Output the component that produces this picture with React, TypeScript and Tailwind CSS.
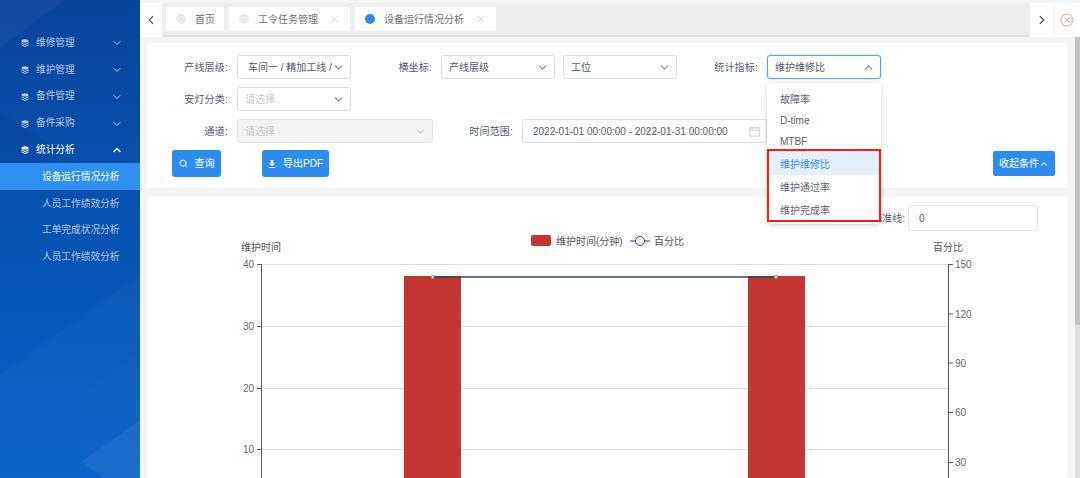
import { ChevronDown, ChevronLeft, ChevronRight, ChevronUp, Search, X } from "lucide-react";

const fontStack = "font-['Liberation_Sans','Noto_Sans_CJK_SC',sans-serif]";

const menus = ["维修管理", "维护管理", "备件管理", "备件采购"];
const subMenus = ["设备运行情况分析", "人员工作绩效分析", "工单完成状况分析", "人员工作绩效分析"];
const options = ["故障率", "D-time", "MTBF"];

function StackIcon({ className }: { className: string }) {
  return (
    <svg viewBox="0 0 8 8" className={className} fill="currentColor">
      <ellipse cx="4" cy="1.9" rx="3.5" ry="1.7" />
      <path d="M.4 3.3 4 5l3.6-1.7v1L4 6 .4 4.3z" />
      <path d="M.4 5.2 4 6.9l3.6-1.7v1L4 8 .4 6.2z" />
    </svg>
  );
}

function Sidebar() {
  return (
    <aside className="relative w-[140px] h-full shrink-0 overflow-hidden bg-gradient-to-b from-[#08459d] to-[#0763c8] pt-[29px]">
      <svg viewBox="0 0 140 478" className="absolute inset-0 w-[140px] h-[478px]">
        <path d="M0 0H64L0 48z" fill="#ffffff" fillOpacity="0.03" />
        <path d="M0 112 60 150 0 190z" fill="#000000" fillOpacity="0.03" />
        <path d="M0 375 140 275V478H0z" fill="#ffffff" fillOpacity="0.018" />
        <path d="M80 395 140 352V478H80z" fill="#ffffff" fillOpacity="0.012" />
        <path d="M82 462 140 420V478H105z" fill="#ffffff" fillOpacity="0.05" />
      </svg>
      <div className="relative flex flex-col text-[9.7px]">
        {menus.map((m) => (
          <div key={m} className="flex items-center h-[26.8px] pt-[1.5px] pl-[21px] pr-[17px] text-[#b4c6e2]">
            <StackIcon className="w-[8px] h-[8px] mr-[7px]" />
            <span>{m}</span>
            <ChevronDown className="ml-auto w-[12px] h-[12px]" strokeWidth={2} />
          </div>
        ))}
        <div className="flex items-center h-[26.8px] pt-[1.5px] pl-[21px] pr-[17px] text-white">
          <StackIcon className="w-[8px] h-[8px] mr-[7px]" />
          <span>统计分析</span>
          <ChevronUp className="ml-auto w-[12px] h-[12px]" strokeWidth={2.5} />
        </div>
        {subMenus.map((s, i) => (
          <div
            key={i}
            className={
              i === 0
                ? "flex items-center h-[26.8px] pt-[1.5px] pl-[42px] bg-[#3090f0] text-white"
                : "flex items-center h-[26.8px] pt-[1.5px] pl-[42px] text-[#b4c6e2]"
            }
          >
            {s}
          </div>
        ))}
      </div>
    </aside>
  );
}

function Tab({ title, active, closable, className }: { title: string; active?: boolean; closable?: boolean; className: string }) {
  return (
    <div className={`flex items-center h-[24px] bg-white pl-[10px] text-[#6b6f76] ${className}`}>
      <span className={active ? "w-[10px] h-[10px] rounded-full bg-[#2d8cf0]" : "w-[10px] h-[10px] rounded-full bg-[#e8eaec]"} />
      <span className="ml-[9px]">{title}</span>
      {closable && <X className="ml-auto mr-[10px] w-[11px] h-[11px] text-[#b0b3b8]" strokeWidth={1.3} />}
    </div>
  );
}

function TabBar() {
  return (
    <div className="flex h-[34px] mt-[3px] shrink-0 text-[10px]">
      <div className="flex items-center justify-center w-[22px] bg-white text-[#515a6e]">
        <ChevronLeft className="w-[14px] h-[14px]" strokeWidth={2.2} />
      </div>
      <div className="flex flex-1 items-center gap-[5px] bg-[#eeeeee] pl-[4px] border-b-[2px] border-[#e4e4e4]">
        <Tab title="首页" className="w-[58px]" />
        <Tab title="工令任务管理" closable className="w-[121px]" />
        <Tab title="设备运行情况分析" active closable className="w-[141px]" />
      </div>
      <div className="flex items-center justify-center w-[24px] bg-white text-[#515a6e] border-r border-[#f0f0f0]">
        <ChevronRight className="w-[14px] h-[14px]" strokeWidth={2.2} />
      </div>
      <div className="flex items-center justify-center w-[26px] bg-white">
        <svg viewBox="0 0 14 14" className="w-[14px] h-[14px]" fill="none" stroke="#f59a96" strokeWidth="1">
          <circle cx="7" cy="7" r="6" />
          <path d="M4.500 4.500l5 5M9.500 4.500l-5 5" />
        </svg>
      </div>
    </div>
  );
}

function Select({ value, placeholder, disabled, open, className }: { value?: string; placeholder?: string; disabled?: boolean; open?: boolean; className: string }) {
  const base = "flex items-center h-[24px] rounded-[3px] border pr-[5px]";
  const tone = disabled
    ? "bg-[#f3f3f3] border-[#e3e5e8]"
    : open
    ? "bg-white border-[#57a3f3] shadow-[0_0_2px_rgba(45,140,240,0.45)]"
    : "bg-white border-[#dcdee2]";
  const chevron = disabled
    ? "ml-auto shrink-0 w-[13px] h-[13px] text-[#c5c8ce]"
    : "ml-auto shrink-0 w-[13px] h-[13px] text-[#808695]";
  return (
    <div className={`${base} ${tone} ${className}`}>
      <span className={value ? "text-[#515a6e] whitespace-nowrap overflow-hidden" : "text-[#c5c8ce]"}>{value ?? placeholder}</span>
      {open ? <ChevronUp className={chevron} strokeWidth={2} /> : <ChevronDown className={chevron} strokeWidth={2} />}
    </div>
  );
}

function Label({ text, className }: { text: string; className: string }) {
  return <span className={`text-right text-[#515a6e] shrink-0 pr-[9px] tracking-[0.2px] ${className}`}>{text}</span>;
}

function FilterCard() {
  return (
    <div className="relative mt-[6px] h-[146px] rounded-[3px] bg-white pt-[12px] text-[10px] border-b border-[#eceef0]">
      <div className="flex items-center h-[24px]">
        <Label text="产线层级:" className="w-[90px]" />
        <Select value="车间一 / 精加工线 /" className="w-[114px] pl-[10px]" />
        <Label text="横坐标:" className="w-[90px]" />
        <Select value="产线层级" className="w-[114px] pl-[7px]" />
        <Select value="工位" className="w-[114px] ml-[8px] pl-[7px]" />
        <Label text="统计指标:" className="w-[90px]" />
        <Select value="维护维修比" open className="w-[114px] pl-[7px]" />
      </div>
      <div className="flex items-center h-[24px] mt-[8px]">
        <Label text="安灯分类:" className="w-[90px]" />
        <Select placeholder="请选择" className="w-[114px] pl-[7px]" />
      </div>
      <div className="flex items-center h-[24px] mt-[8px]">
        <Label text="通道:" className="w-[90px]" />
        <Select placeholder="请选择" disabled className="w-[196px] pl-[7px]" />
        <Label text="时间范围:" className="w-[89px]" />
        <div className="flex items-center w-[245px] h-[24px] rounded-[3px] border border-[#dcdee2] pl-[10px] pr-[6px] text-[#515a6e] whitespace-nowrap">
          2022-01-01 00:00:00 - 2022-01-31 00:00:00
          <svg viewBox="0 0 12 12" className="ml-auto w-[11px] h-[11px]" fill="none" stroke="#b5b8be" strokeWidth="0.8">
            <rect x="1" y="2" width="10" height="9" />
            <path d="M1 4.500h10M3.500 1v2M8.500 1v2" />
          </svg>
        </div>
      </div>
      <div className="flex items-center mt-[7px] ml-[25px] pr-[12px]">
        <button className="flex items-center justify-center w-[49px] h-[27px] rounded-[3px] bg-[#2d8cf0] text-white">
          <Search className="w-[9px] h-[9px] mr-[7px]" strokeWidth={2.5} />
          查询
        </button>
        <button className="flex items-center justify-center w-[67px] h-[27px] ml-[41px] rounded-[3px] bg-[#2d8cf0] text-white">
          <svg viewBox="0 0 10 10" className="w-[8px] h-[8px] mr-[7px]" fill="white">
            <path d="M3.500 0h3v4H9L5 7.500 1 4h2.500zM1 8.800h8V10H1z" />
          </svg>
          导出PDF
        </button>
        <button className="flex items-center justify-center w-[62px] h-[25px] ml-auto rounded-[2px] bg-[#2d8cf0] text-white">
          收起条件
          <ChevronUp className="w-[10px] h-[10px]" strokeWidth={2.5} />
        </button>
      </div>

      {/* open dropdown of the metric select */}
      <div className="absolute left-[620px] top-[40px] w-[114px] h-[141px] z-10 rounded-[3px] bg-white shadow-[0_1px_5px_rgba(0,0,0,0.2)] pt-[6px] text-[#5c6370]">
        {options.map((o) => (
          <div key={o} className="flex items-center pl-[13px] h-[21px]">
            {o}
          </div>
        ))}
        <div className="relative -mt-[3px] h-[73px] border-2 border-[#f81d14] pt-[1px]">
          <div className="flex items-center h-[23px] pl-[11px] pt-[2px] bg-[#e3f0fb] text-[#2d8cf0]">维护维修比</div>
          <div className="flex items-center h-[23px] pl-[11px] pt-[2px]">维护通过率</div>
          <div className="flex items-center h-[23px] pl-[11px] pt-[2px]">维护完成率</div>
        </div>
      </div>
    </div>
  );
}

function Chart() {
  const grid = [264, 326, 388, 449];
  const left = [
    { v: "40", y: 264 },
    { v: "30", y: 326 },
    { v: "20", y: 388 },
    { v: "10", y: 449 },
  ];
  const right = [
    { v: "150", y: 264 },
    { v: "120", y: 313.5 },
    { v: "90", y: 362.5 },
    { v: "60", y: 412 },
    { v: "30", y: 462 },
  ];
  return (
    <svg viewBox="147 231 920 247" className="block w-[920px] h-[247px] text-[10px]" fontFamily="'Liberation Sans','Noto Sans CJK SC',sans-serif">
      {grid.map((y) => (
        <line key={y} x1="262" x2="948" y1={y + 0.5} y2={y + 0.5} stroke="#e0e0e0" />
      ))}
      <rect x="404" y="276" width="57" height="202" fill="#c23531" />
      <rect x="748" y="276" width="57" height="202" fill="#c23531" />
      <line x1="432.500" x2="776" y1="277" y2="277" stroke="#2f4554" strokeWidth="1.500" />
      <circle cx="432.500" cy="277" r="1.500" fill="#fff" stroke="#6d8494" />
      <circle cx="776" cy="277" r="1.500" fill="#fff" stroke="#6d8494" />

      <line x1="261.500" x2="261.500" y1="264" y2="478" stroke="#555" />
      <line x1="948.500" x2="948.500" y1="264" y2="478" stroke="#555" />
      {left.map((t) => (
        <g key={t.y}>
          <line x1="257" x2="261" y1={t.y + 0.5} y2={t.y + 0.5} stroke="#555" />
          <text x="254" y={t.y + 4} textAnchor="end" fill="#666">{t.v}</text>
        </g>
      ))}
      {right.map((t) => (
        <g key={t.y}>
          <line x1="949" x2="953" y1={t.y + 0.5} y2={t.y + 0.5} stroke="#555" />
          <text x="955" y={t.y + 4} fill="#666">{t.v}</text>
        </g>
      ))}
      <text x="241" y="251" fill="#555">维护时间</text>
      <text x="933" y="251" fill="#555">百分比</text>

      <rect x="531" y="235" width="20" height="11" rx="2" fill="#c23531" />
      <text x="556" y="245" fill="#555">维护时间(分钟)</text>
      <line x1="630" x2="650" y1="241" y2="241" stroke="#2f4554" />
      <circle cx="640" cy="241" r="4.500" fill="#fff" stroke="#2f4554" />
      <text x="654" y="245" fill="#555">百分比</text>
    </svg>
  );
}

function ChartCard() {
  return (
    <div className="mt-[8px] flex-1 rounded-[3px] bg-white overflow-hidden text-[10px]">
      <div className="flex items-center justify-end h-[34px] pt-[8px] pr-[29px]">
        <span className="text-[#515a6e] mr-[3px]">标准线:</span>
        <div className="flex items-center w-[130px] h-[26px] rounded-[3px] border border-[#e3e5e8] pl-[10px] text-[#515a6e]">0</div>
      </div>
      <Chart />
    </div>
  );
}

export default function App() {
  return (
    <div className={`flex w-[1080px] h-[478px] overflow-hidden bg-[#f4f5f7] ${fontStack}`}>
      <Sidebar />
      <main className="flex flex-col flex-1 min-w-0">
        <TabBar />
        <div className="flex flex-1 min-h-0">
          <div className="flex flex-col w-[920px] ml-[7px] min-h-0">
            <FilterCard />
            <ChartCard />
          </div>
          <div className="ml-auto w-[5px] flex flex-col">
            <div className="h-[288px] bg-[#c4c4c4]" />
            <div className="flex-1 bg-[#dedede]" />
          </div>
        </div>
      </main>
    </div>
  );
}
